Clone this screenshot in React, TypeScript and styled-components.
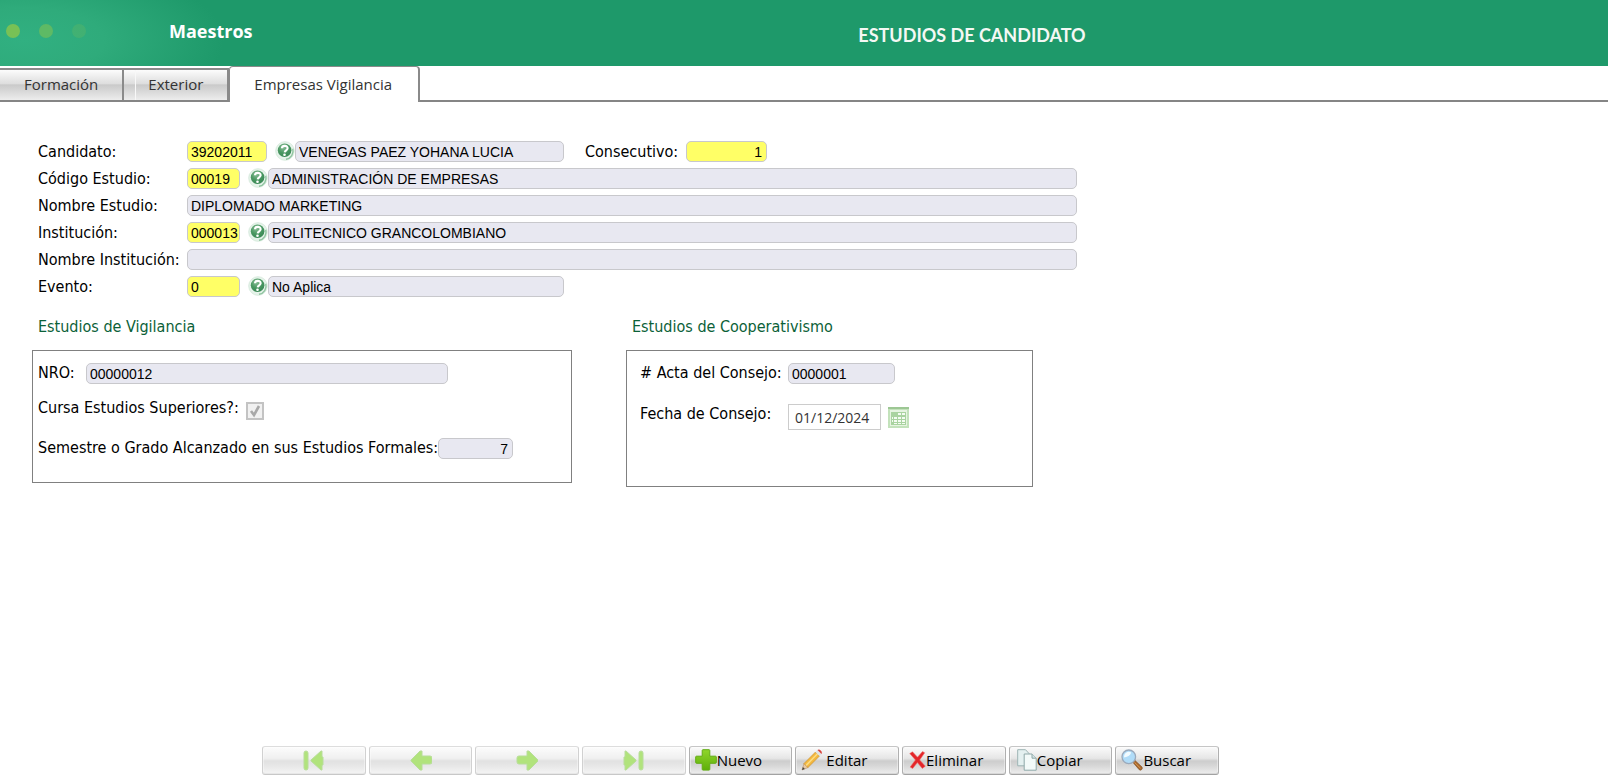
import React from "react";
import styled, { createGlobalStyle } from "styled-components";

const labelFont = `"DejaVu Sans Condensed", "DejaVu Sans", sans-serif`;
const uiFont = `"Open Sans", "Noto Sans", sans-serif`;
const inputFont = `"Liberation Sans", sans-serif`;

const GlobalStyle = createGlobalStyle`
  *, *::before, *::after { box-sizing: border-box; }
  body { margin: 0; background: #fff; color: #000; font: 16px/20px ${labelFont}; }
  h1, h2, fieldset { margin: 0; padding: 0; border: 0; font-weight: normal; }
`;

const Page = styled.div`
  min-height: 100vh;
  display: flex;
  flex-direction: column;
`;

const Header = styled.header`
  display: flex;
  align-items: center;
  height: 66px;
  flex: none;
  color: #fff;
  background: radial-gradient(ellipse 200px 80px at 24px 40px, #31b081 0%, #2fab7b 40%, #1e996a 100%) #1e996a;
`;

const Brand = styled.div`
  display: flex;
  align-items: center;
  width: 336px;
  padding: 0 0 4px 6px;
  font: bold 18px/24px ${uiFont};
`;

const Dots = styled.div`
  display: flex;
  gap: 19px;
  width: 163px;
`;

const Dot = styled.span<{ $alpha: number }>`
  width: 14px;
  height: 14px;
  border-radius: 50%;
  background: rgba(139, 197, 75, ${(p) => p.$alpha});
`;

const Title = styled.h1`
  flex: 1;
  padding-top: 4px;
  text-align: center;
  font: bold 18px/24px Lato, sans-serif;
  color: #f4f8f4;
`;

const TabBar = styled.nav`
  display: flex;
  align-items: flex-end;
  height: 36px;
  flex: none;
  border-bottom: 2px solid #858585;
`;

const Tab = styled.button<{ $active?: boolean; $seam?: boolean }>`
  height: ${(p) => (p.$active ? 36 : 32)}px;
  margin-bottom: ${(p) => (p.$active ? -2 : 0)}px;
  padding: 0 ${(p) => (p.$active ? 26 : 24)}px ${(p) => (p.$active ? 2 : 3)}px 24px;
  border: solid #8a8a8a;
  border-width: ${(p) => (p.$active ? "1px 2px 0 1px" : "2px 2px 0 0")};
  border-radius: ${(p) => (p.$active ? "4px 4px 0 0" : "0")};
  background: ${(p) =>
    p.$active
      ? "#fff"
      : `${p.$seam ? "linear-gradient(#f8f8f8, #f8f8f8) 11px 0 / 1px 100% no-repeat, " : ""}linear-gradient(#fcfcfc 0%, #dedede 45%, #cacaca 50%, #d4d4d4 65%, #ededed 100%)`};
  font: 15px/24px ${uiFont};
  color: #333;
`;

const Main = styled.main`
  flex: 1;
  padding: 39px 32px 32px;
`;

const Rows = styled.div`
  display: grid;
  gap: 6px;
  padding-left: 6px;
`;

const Row = styled.div`
  display: flex;
  align-items: center;
  height: 21px;
`;

const Label = styled.label`
  width: 149px;
  flex: none;
  white-space: nowrap;
`;

const SideLabel = styled.label`
  width: 101px;
  margin-left: 21px;
  white-space: nowrap;
`;

const Field = styled.input<{ $w: number; $key?: boolean; $end?: boolean }>`
  width: ${(p) => p.$w}px;
  height: 21px;
  min-width: 0;
  padding: 1px ${(p) => (p.$end ? 4 : 1)}px 0 3px;
  border: 1px solid #c8c8cc;
  border-radius: 5px;
  outline: 0;
  background: ${(p) => (p.$key ? "#ffff66" : "#e8e8f1")};
  color: #000;
  font: 14px/18px ${inputFont};
  text-align: ${(p) => (p.$end ? "right" : "left")};
`;

const HelpButton = styled.button`
  display: flex;
  width: 20px;
  height: 20px;
  margin: 0 0 2px 8px;
  padding: 0;
  border: 0;
  background: none;
`;

const Groups = styled.div`
  display: flex;
  align-items: flex-start;
  gap: 54px;
  margin-top: 20px;
`;

const Group = styled.section<{ $w: number }>`
  width: ${(p) => p.$w}px;
`;

const GroupTitle = styled.h2`
  margin-bottom: 13px;
  padding-left: 6px;
  font: 16px/20px ${labelFont};
  color: #0b6138;
`;

const GroupBox = styled.fieldset<{ $indent: number; $bottom: number; $gap: number }>`
  display: grid;
  gap: ${(p) => p.$gap}px;
  padding: 12px 0 ${(p) => p.$bottom}px ${(p) => p.$indent}px;
  border: 1px solid #808080;
`;

const GroupRow = styled.div<{ $h: number }>`
  display: flex;
  align-items: flex-start;
  height: ${(p) => p.$h}px;
`;

const GroupLabel = styled.label<{ $w: number }>`
  width: ${(p) => p.$w}px;
  flex: none;
  white-space: nowrap;
`;

const Check = styled.input`
  appearance: none;
  width: 18px;
  height: 18px;
  margin: 4px 0 0;
  border: 2px solid #c3c3c3;
  background: #f1f1f1
    url("data:image/svg+xml,%3Csvg xmlns='http://www.w3.org/2000/svg' viewBox='0 0 14 14'%3E%3Cpath d='M3 7l3 4L11 2' fill='none' stroke='%23a8a8a8' stroke-width='2.6'/%3E%3C/svg%3E")
    center / 14px 14px no-repeat;
`;

const DateField = styled.input`
  width: 93px;
  height: 26px;
  padding: 0 6px;
  border: 1px solid #ccc;
  background: #fff;
  font: 14px/20px ${uiFont};
  color: #333;
`;

const CalendarButton = styled.button`
  display: flex;
  margin: 3px 0 0 7px;
  padding: 0;
  border: 0;
  background: none;
`;

const Toolbar = styled.footer`
  display: flex;
  gap: 3px;
  width: 100%;
  max-width: 1219px;
  padding: 0 0 3px 262px;
`;

const ToolButton = styled.button<{ $centered?: boolean }>`
  display: flex;
  flex: 1 1 0;
  align-items: center;
  justify-content: ${(p) => (p.$centered ? "center" : "flex-start")};
  min-width: 0;
  height: 29px;
  padding: 0 5px 1px;
  border: 1px solid;
  border-color: #c6c6c6 #b0b0b0 #a2a2a2;
  border-radius: 3px;
  background: linear-gradient(#fbfbfb 0%, #e6e6e6 42%, #cdcdcd 52%, #d6d6d6 68%, #eeeeee 100%);
  box-shadow: inset 0 0 0 1px rgba(255, 255, 255, 0.4), inset 0 -1px 0 #bdbdbd;
  color: #000;
  font: 15px/20px ${uiFont};
  &:disabled {
    opacity: 0.58;
  }
`;

const IconSlot = styled.span<{ $w: number }>`
  display: flex;
  justify-content: flex-end;
  width: ${(p) => p.$w}px;
  flex: none;
`;

const PencilSlot = styled(IconSlot)`
  justify-content: flex-start;
`;

function HelpIcon() {
  return (
    <svg width="20" height="20" viewBox="0 0 20 20" aria-hidden="true">
      <defs>
        <radialGradient id="ball" cx="40%" cy="28%" r="80%">
          <stop offset="0" stopColor="#8dc09a" />
          <stop offset="0.5" stopColor="#4a9862" />
          <stop offset="1" stopColor="#378553" />
        </radialGradient>
      </defs>
      <circle cx="10" cy="10" r="9.3" fill="#e6f3ea" stroke="#d3e8d9" strokeWidth="0.8" />
      <path d="M11 18.300a8.400 8.400 0 0 0 6.800-10.500" fill="none" stroke="#8fc4a0" strokeWidth="1.4" />
      <circle cx="9.6" cy="9.2" r="6.800" fill="url(#ball)" />
      <path d="M6.900 7.300c.2-3.300 6-3.200 5.700.1-.2 1.900-2.700 2-2.900 4" fill="none" stroke="#fff" strokeWidth="2.1" />
      <circle cx="9.500" cy="13.800" r="1.300" fill="#fff" />
    </svg>
  );
}

function CalendarIcon() {
  return (
    <svg width="21" height="21" viewBox="0 0 21 21" aria-hidden="true">
      <rect width="21" height="21" fill="#c3e2bb" />
      <rect width="21" height="2" fill="#9dc794" />
      <rect x="2" y="3" width="17" height="16" fill="#e6f4e1" />
      <path d="M3 5h15v13H3z" fill="#a9d3a0" />
      <path
        d="M10 6h3v2h-3zM14 6h3v2h-3zM4 10h1v2H4zM6 10h3v2H6zM10 10h3v2h-3zM14 10h3v2h-3zM4 13h1v2H4zM6 13h3v2H6zM10 13h3v2h-3zM14 13h3v2h-3zM6 16h3v1H6zM10 16h3v1h-3zM14 16h3v1h-3z"
        fill="#f4fbf2"
      />
    </svg>
  );
}

type NavKind = "first" | "prev" | "next" | "last";

const navShapes: Record<NavKind, string> = {
  first: "M1 3q0-2 2-2t2 2v15q0 2-2 2t-2-2zM18 1h1v6h1v8h-1v5h-1L8 11v-1z",
  prev: "M12 1v5h8q2 0 2 2v4q0 2-2 2h-8v6h-2L1 11v-1L10 1z",
  next: "M11 1v5H3q-2 0-2 2v4q0 2 2 2h8v6h2l9-9v-1L13 1z",
  last: "M2 1h1l10 9v1L3 20H2v-5H1V7h1zM16 3q0-2 2-2t2 2v15q0 2-2 2t-2-2z",
};

function NavIcon({ kind }: { kind: NavKind }) {
  return (
    <svg width="22" height="21" viewBox="0 0 22 21" aria-hidden="true">
      <path d={navShapes[kind]} fill="#79d01e" stroke="#86c653" strokeWidth="1" />
    </svg>
  );
}

function PlusIcon() {
  return (
    <svg width="22" height="22" viewBox="0 0 22 22" aria-hidden="true">
      <defs>
        <linearGradient id="plus" x1="0" y1="0" x2="0" y2="1">
          <stop offset="0" stopColor="#8fd62b" />
          <stop offset="1" stopColor="#5faf09" />
        </linearGradient>
      </defs>
      <path
        d="M8 .7h6q.8 0 .8.800v5.700h5.700q.8 0 .8.800v5.500q0 .8-.8.800h-5.700v6q0 .8-.8.800H8q-.8 0-.8-.8v-6H1.500q-.8 0-.8-.8V8q0-.8.8-.8h5.700V1.500q0-.8.8-.8z"
        fill="url(#plus)"
        stroke="#62ac14"
      />
    </svg>
  );
}

function PencilIcon() {
  return (
    <svg width="22" height="22" viewBox="0 0 22 22" aria-hidden="true">
      <path d="M1 21l2-6.500 4 4z" fill="#e9c9a4" stroke="#b98f63" strokeWidth="0.6" />
      <path d="M1 21l.9-2.900 2 2z" fill="#444" />
      <path d="M3 14.500L14.500 3l4 4L7 18.500z" fill="#f3b73e" stroke="#c88a26" strokeWidth="0.6" />
      <path d="M4.600 15.700L16 4.300l1 1L5.700 16.900z" fill="#fbdc84" />
      <path d="M14.500 3l2-1.900 4 4-2 1.900z" fill="#dfe3e6" />
      <path d="M16.500 1.100q1.400-1.300 3.200.3t.8 3.700z" fill="#d8423b" />
    </svg>
  );
}

function DeleteIcon() {
  return (
    <svg width="17" height="20" viewBox="0 0 18 20" aria-hidden="true">
      <path
        d="M.8 3.200l2.900-1.900L9 7l5.300-5.900 2.300 1.300L11.300 10l6 6.500-3.200 2.400L8.900 12.700 3.900 19l-2.700-1.500L6.800 9.900z"
        fill="#e3262a"
        stroke="#ef6a66"
        strokeWidth="0.6"
      />
    </svg>
  );
}

function CopyIcon() {
  return (
    <svg width="20" height="22" viewBox="0 0 20 22" aria-hidden="true">
      <path d="M.7 .7h7.800l3.500 3.800v12.300H.7z" fill="#e4f0f0" stroke="#9db4b4" />
      <path d="M7.200 5h7.800l4.200 4.200v12H7.200z" fill="#f3faf9" stroke="#8fa8a8" />
      <path d="M15 5v4.200h4.200" fill="#d5e4e4" stroke="#8fa8a8" />
    </svg>
  );
}

function SearchIcon() {
  return (
    <svg width="22" height="22" viewBox="0 0 22 22" aria-hidden="true">
      <path d="M12 13.500l2-2 7 6.500q.8 1.500-.4 2.600t-2.300.2z" fill="#a8672c" stroke="#7d4a1b" strokeWidth="0.6" />
      <path d="M13.500 13.400l6 5.800" stroke="#d79a55" strokeWidth="1" />
      <circle cx="7.800" cy="7.800" r="6.800" fill="#b0dcf8" stroke="#9aa9bb" strokeWidth="1.300" />
      <path d="M3.200 8.500a4.700 4.700 0 0 1 7-5.100q-1 4-7 5.100z" fill="#f2fbff" />
    </svg>
  );
}

interface LookupProps {
  id: string;
  label: string;
  code: string;
  codeWidth: number;
  text: string;
  textWidth: number;
  children?: React.ReactNode;
}

function LookupRow({ id, label, code, codeWidth, text, textWidth, children }: LookupProps) {
  return (
    <Row>
      <Label htmlFor={id}>{label}</Label>
      <Field id={id} $w={codeWidth} $key defaultValue={code} />
      <HelpButton type="button" aria-label={`Ayuda ${label}`}>
        <HelpIcon />
      </HelpButton>
      <Field $w={textWidth} aria-label={`Descripción ${label}`} defaultValue={text} readOnly />
      {children}
    </Row>
  );
}

function TextRow({ id, label, value }: { id: string; label: string; value: string }) {
  return (
    <Row>
      <Label htmlFor={id}>{label}</Label>
      <Field id={id} $w={890} defaultValue={value} readOnly />
    </Row>
  );
}

const navButtons: { kind: NavKind; name: string }[] = [
  { kind: "first", name: "Primero" },
  { kind: "prev", name: "Anterior" },
  { kind: "next", name: "Siguiente" },
  { kind: "last", name: "Último" },
];

const actions = [
  { text: "Nuevo", icon: <PlusIcon />, Slot: IconSlot, width: 22 },
  { text: "Editar", icon: <PencilIcon />, Slot: PencilSlot, width: 25 },
  { text: "Eliminar", icon: <DeleteIcon />, Slot: IconSlot, width: 18 },
  { text: "Copiar", icon: <CopyIcon />, Slot: IconSlot, width: 22 },
  { text: "Buscar", icon: <SearchIcon />, Slot: IconSlot, width: 22 },
];

export default function App() {
  return (
    <Page>
      <GlobalStyle />
      <Header>
        <Brand>
          <Dots>
            <Dot $alpha={0.8} />
            <Dot $alpha={0.5} />
            <Dot $alpha={0.2} />
          </Dots>
          Maestros
        </Brand>
        <Title>ESTUDIOS DE CANDIDATO</Title>
      </Header>
      <TabBar>
        <Tab type="button">Formación</Tab>
        <Tab type="button" $seam>
          Exterior
        </Tab>
        <Tab type="button" $active>
          Empresas Vigilancia
        </Tab>
      </TabBar>
      <Main>
        <Rows>
          <LookupRow id="candidato" label="Candidato:" code="39202011" codeWidth={80} text="VENEGAS PAEZ YOHANA LUCIA" textWidth={269}>
            <SideLabel htmlFor="consecutivo">Consecutivo:</SideLabel>
            <Field id="consecutivo" $w={81} $key $end defaultValue="1" />
          </LookupRow>
          <LookupRow id="codigo" label="Código Estudio:" code="00019" codeWidth={53} text="ADMINISTRACIÓN DE EMPRESAS" textWidth={809} />
          <TextRow id="estudio" label="Nombre Estudio:" value="DIPLOMADO MARKETING" />
          <LookupRow id="institucion" label="Institución:" code="000013" codeWidth={53} text="POLITECNICO GRANCOLOMBIANO" textWidth={809} />
          <TextRow id="nombreInstitucion" label="Nombre Institución:" value="" />
          <LookupRow id="evento" label="Evento:" code="0" codeWidth={53} text="No Aplica" textWidth={296} />
        </Rows>
        <Groups>
          <Group $w={540}>
            <GroupTitle>Estudios de Vigilancia</GroupTitle>
            <GroupBox $indent={5} $bottom={23} $gap={14}>
              <GroupRow $h={21}>
                <GroupLabel htmlFor="nro" $w={48}>NRO:</GroupLabel>
                <Field id="nro" $w={362} defaultValue="00000012" readOnly />
              </GroupRow>
              <GroupRow $h={26}>
                <GroupLabel htmlFor="superiores" $w={208}>Cursa Estudios Superiores?:</GroupLabel>
                <Check id="superiores" type="checkbox" defaultChecked disabled />
              </GroupRow>
              <GroupRow $h={21}>
                <GroupLabel htmlFor="semestre" $w={400}>Semestre o Grado Alcanzado en sus Estudios Formales:</GroupLabel>
                <Field id="semestre" $w={75} $end defaultValue="7" readOnly />
              </GroupRow>
            </GroupBox>
          </Group>
          <Group $w={407}>
            <GroupTitle>Estudios de Cooperativismo</GroupTitle>
            <GroupBox $indent={13} $bottom={56} $gap={20}>
              <GroupRow $h={21}>
                <GroupLabel htmlFor="acta" $w={148}># Acta del Consejo:</GroupLabel>
                <Field id="acta" $w={107} defaultValue="0000001" readOnly />
              </GroupRow>
              <GroupRow $h={26}>
                <GroupLabel htmlFor="fecha" $w={148}>Fecha de Consejo:</GroupLabel>
                <DateField id="fecha" defaultValue="01/12/2024" readOnly />
                <CalendarButton type="button" aria-label="Elegir fecha">
                  <CalendarIcon />
                </CalendarButton>
              </GroupRow>
            </GroupBox>
          </Group>
        </Groups>
      </Main>
      <Toolbar>
        {navButtons.map((b) => (
          <ToolButton key={b.kind} type="button" aria-label={b.name} disabled $centered>
            <NavIcon kind={b.kind} />
          </ToolButton>
        ))}
        {actions.map(({ text, icon, Slot, width }) => (
          <ToolButton key={text} type="button">
            <Slot $w={width}>{icon}</Slot>
            {text}
          </ToolButton>
        ))}
      </Toolbar>
    </Page>
  );
}
